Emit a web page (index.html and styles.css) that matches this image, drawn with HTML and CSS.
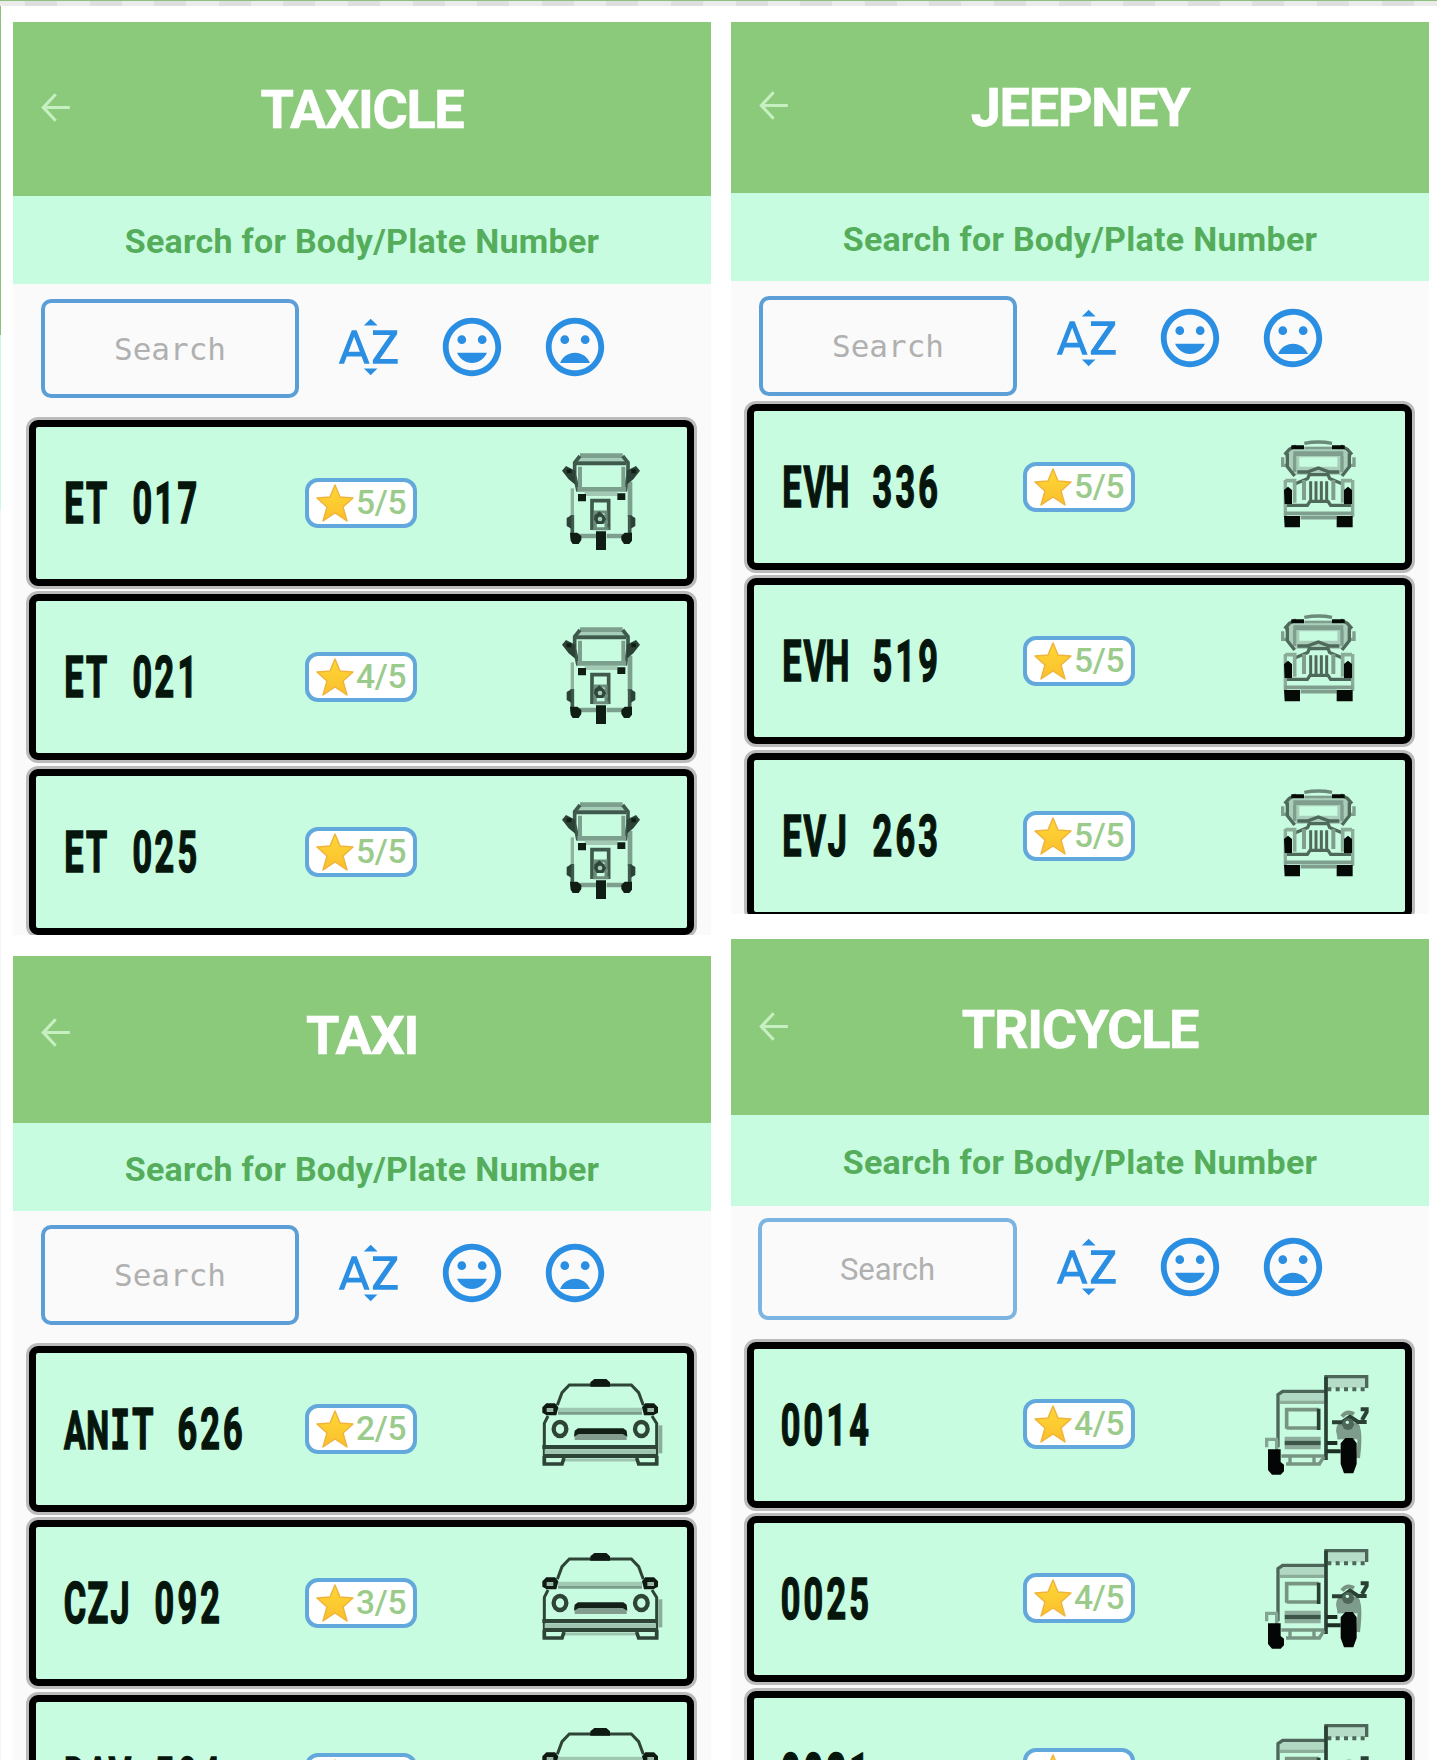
FILE: index.html
```html
<!DOCTYPE html>
<html lang="en">
<head>
<meta charset="utf-8">
<title>Vehicle lists</title>
<link rel="stylesheet" href="styles.css">
</head>
<body>
<svg class="defs" aria-hidden="true">
  <linearGradient id="gold" x1="0" y1="0" x2="0" y2="1"><stop offset="0" stop-color="#fdd835"/><stop offset="1" stop-color="#fbbf2d"/></linearGradient>
  <symbol id="back" viewBox="0 0 24 24"><path d="M20 11.2H7.2l5.5-6-1.2-1.2L4 12l7.5 8 1.2-1.2-5.5-6H20z"/></symbol>
  <symbol id="az" viewBox="0 0 24 24"><path d="M14.94 4.66h-4.72l2.36-2.36 2.36 2.36zm-4.69 14.71h4.66l-2.33 2.33-2.33-2.33zM6.1 6.27L1.6 17.73h1.84l.92-2.45h5.11l.92 2.45h1.84L7.74 6.27H6.1zm-1.13 7.37l1.94-5.18 1.94 5.18H4.97zm10.76 2.5h6.12v1.59h-8.53v-1.29l5.92-8.56h-5.88v-1.6h8.3v1.26l-5.93 8.6z"/></symbol>
  <symbol id="happy" viewBox="0 0 24 24"><path d="M11.99 2C6.47 2 2 6.48 2 12s4.47 10 9.99 10C17.52 22 22 17.52 22 12S17.52 2 11.99 2zM12 20c-4.42 0-8-3.58-8-8s3.58-8 8-8 8 3.58 8 8-3.58 8-8 8zm3.5-9c.83 0 1.5-.67 1.5-1.5S16.33 8 15.5 8 14 8.67 14 9.5s.67 1.5 1.5 1.5zm-7 0c.83 0 1.5-.67 1.5-1.5S9.33 8 8.5 8 7 8.67 7 9.5 7.67 11 8.5 11zm3.5 6.5c2.33 0 4.31-1.46 5.11-3.5H6.89c.8 2.04 2.78 3.5 5.11 3.5z"/></symbol>
  <symbol id="sad" viewBox="0 0 24 24"><path d="M11.99 2C6.47 2 2 6.48 2 12s4.47 10 9.99 10C17.52 22 22 17.52 22 12S17.52 2 11.99 2zM12 20c-4.42 0-8-3.58-8-8s3.58-8 8-8 8 3.58 8 8-3.58 8-8 8zm3.5-9c.83 0 1.5-.67 1.5-1.5S16.33 8 15.5 8 14 8.67 14 9.5s.67 1.5 1.5 1.5zm-7 0c.83 0 1.5-.67 1.5-1.5S9.33 8 8.5 8 7 8.67 7 9.5 7.67 11 8.5 11zm3.5 3c-2.33 0-4.31 1.46-5.11 3.5h10.22c-.8-2.04-2.78-3.5-5.11-3.5z"/></symbol>
  <symbol id="star" viewBox="0 0 38 38"><path fill="url(#gold)" stroke="#f0b43c" stroke-width="1.5" stroke-linejoin="round" d="M19 1l5 12 13 1-10 9 4 14-12-8-12 8 4-14L1 14l13-1z"/></symbol>

  <symbol id="taxicle" viewBox="0 0 420 420">
    <g fill="none" stroke="#3f5a4d" stroke-width="11">
      <path stroke="#7da08e" stroke-width="14" d="M120 77H248"/>
      <path stroke="#a5cdb8" stroke-width="10" d="M114 89H252"/>
      <path d="M120 78L104 98V135L114 184M248 78L264 98V135L256 184"/>
      <path stroke-width="12" d="M108 100H258"/>
      <path stroke="#7da08e" stroke-width="14" d="M112 178H258"/>
      <path stroke="#7da08e" stroke-width="12" d="M120 110V172M250 110V172"/>
      <path stroke="#a3c9b5" stroke-width="12" d="M134 192H232"/>
      <path stroke="#8fb3a0" stroke-width="10" d="M97 175V260"/>
      <path stroke="#7da08e" stroke-width="14" d="M270 155V262"/>
      <path d="M97 255V325M269 255V325"/>
      <path stroke="#7da08e" stroke-width="14" d="M110 318H168M200 318H256"/>
      <path d="M156 300V212H206V300"/>
      <path stroke="#6d8d7c" stroke-width="9" d="M166 296V246H198V296M160 276H204M160 296H206"/>
    </g>
    <path fill="#2c4236" d="M66 122l12-14 28 14v42l-20-16zM300 122l-12-14-28 14v42l20-16zM80 264l14-8v40l-14-8zM286 264l-14-8v40l14-8z"/>
    <path fill="#101d15" d="M80 118h14v12H80zM274 118h14v12h-14zM114 192h24v22h-24zM232 190h24v20h-24zM90 308h22l12 10v12l-8 12H98l-6-10zM276 308h-22l-10 10v12l8 12h16l8-10zM168 304h30v56h-30z"/>
    <path fill="#2f463a" d="M164 256l14-12 14 12 6 12-8 14h-20l-8-14z"/>
    <circle cx="180" cy="267" r="7" fill="#a5cdb8"/>
  </symbol>

  <symbol id="jeepney" viewBox="0 0 420 420">
    <path fill="#a9cfbb" d="M76 96L104 88H246L274 96V130L250 165H100L76 130z"/>
    <path fill="#c8fce0" d="M118 112H232V140H118zM66 112h16v24H66zM268 112h16v24h-16z"/>
    <g fill="none" stroke="#4f6a5b" stroke-width="10">
      <path stroke="#6c8a7a" d="M133 70Q175 62 216 70"/>
      <path stroke-width="8" stroke="#7f9e8d" d="M133 84H216"/>
      <path d="M74 104L88 88L108 78M276 104L262 88L242 78"/>
      <path stroke="#7f9e8d" stroke-width="14" d="M100 101H250"/>
      <path stroke="#7f9e8d" d="M68 112V136H80M282 112V136H270"/>
      <path d="M82 100V140L104 168M268 100V140L246 168"/>
      <path stroke="#7f9e8d" d="M104 108V156M246 108V156"/>
      <path d="M112 156H142L175 144L208 156H238"/>
      <path d="M142 178L148 164H204L210 178M104 192L142 176M248 192L210 176"/>
      <path stroke="#7f9e8d" stroke-width="12" d="M132 180V240M220 180V240"/>
      <path stroke-width="9" d="M152 184V240M168 184V240M184 184V240M200 184V240"/>
      <path stroke="#8aac99" stroke-width="11" d="M76 182H104V248M276 182H248V248"/>
      <path d="M80 256H142L150 244H204L212 256H276"/>
      <path stroke="#8aac99" d="M76 180V290M278 180V290"/>
      <path stroke="#7f9e8d" stroke-width="11" d="M74 280H278M122 293H230"/>
    </g>
    <path fill="#050a07" d="M94 76h38v12H94zM216 76h38v12h-38zM72 210l12-10 12 10v42H74zM276 210l-12-10-12 10v42h24zM72 288h48v34H74zM230 288h48v34h-48z"/>
  </symbol>

  <symbol id="taxi" viewBox="0 0 420 420">
    <g fill="none" stroke="#2d4437" stroke-width="9">
      <path d="M82 136L96 98L118 75H304L326 98L340 136"/>
      <path stroke="#9fc9b2" stroke-width="18" d="M84 152H336"/>
      <path stroke="#7a9c89" stroke-width="8" d="M84 160H336"/>
      <path d="M54 168L43 190V310M366 168L380 190V310"/>
      <path stroke="#8aad99" stroke-width="12" d="M391 196V280"/>
      <ellipse cx="90" cy="207" rx="19" ry="21" stroke-width="13"/>
      <ellipse cx="334" cy="207" rx="19" ry="21" stroke-width="13"/>
      <path stroke="#9fc5b1" stroke-width="14" d="M44 275H378"/>
      <path stroke-width="12" d="M37 261H384M44 288H378"/>
      <path stroke="#9fc5b1" d="M100 300H320"/>
      <path stroke-width="11" d="M43 288V312H96L102 294M380 288V312H326L320 294"/>
    </g>
    <path fill="#0e1912" d="M181 80V67l12-10h36l11 10v13zM37 142l12-12h26l10 12-6 24H50l-13-8zM384 142l-12-12h-26l-10 12 6 24h28l14-8z"/>
    <path fill="#9bb7a8" d="M50 144h20v12H50zM352 144h20v12h-20z"/>
    <path fill="#829c8e" d="M134 218h156v22H134z"/>
    <path fill="#122018" d="M132 230l2-18 10-7h136l10 7 2 18-14-8H146z"/>
  </symbol>

  <symbol id="tricycle" viewBox="0 0 420 420">
    <g fill="none" stroke="#4d6659" stroke-width="10">
      <path fill="#b4dcc7" d="M228 86V50H350V84"/>
      <path stroke-width="12" stroke-dasharray="12 13" d="M232 88H350"/>
      <path fill="#b0d8c3" stroke="none" d="M90 98H228V130H90z"/>
      <path d="M84 262V104L98 94H228"/>
      <path stroke="#8bad9a" d="M90 127H222"/>
      <path stroke="#2b4034" stroke-width="11" d="M228 50V300"/>
      <path stroke="#789584" stroke-width="11" d="M110 206V149H206M110 204H206"/>
      <path stroke="#2b4034" stroke-width="11" d="M206 146V210"/>
      <path stroke="#8dac9b" stroke-width="12" d="M104 236H212M104 262H212"/>
      <path stroke="#3d5548" stroke-width="13" d="M104 249H212"/>
      <path stroke="#789584" d="M94 288H222M108 312H212M120 290V312M192 290V312M222 290L208 312"/>
      <path stroke="#83a592" d="M50 262V238H84M80 240V280"/>
      <path stroke="#1c2e24" stroke-width="12" d="M230 249H262M230 274H272"/>
      <path stroke="#789584" stroke-width="12" d="M272 236Q258 210 270 194H320Q334 212 324 294M276 170Q290 150 312 162"/>
      <path stroke="#2b4034" stroke-width="12" d="M246 187H276L300 170L324 186H350M336 180L350 156V148H332"/>
    </g>
    <path fill="#7d9c8b" d="M262 198h68v40h-68z"/>
    <circle cx="294" cy="192" r="18" fill="#4d6659"/>
    <circle cx="292" cy="187" r="5" fill="#c8fce0"/>
    <path fill="#030604" d="M54 268h38v38l10 8v20l-10 10H66l-12-14zM272 250l14-16h22l12 16v62l-10 28h-28l-10-28z"/>
  </symbol>
</svg>

<main class="board">
  <div class="column">
    <section class="panel panel-taxicle">
      <header class="bar"><svg class="back"><use href="#back"/></svg><h1>TAXICLE</h1></header>
      <p class="band">Search for Body/Plate Number</p>
      <div class="tools"><div class="search">Search</div><svg><use href="#az"/></svg><svg><use href="#happy"/></svg><svg><use href="#sad"/></svg></div>
      <div class="list">
        <article class="card"><svg class="plate"><text x="63 101 139 177 214 252">ET 017</text></svg><span class="rating"><svg><use href="#star"/></svg>5/5</span><svg class="vehicle"><use href="#taxicle"/></svg></article>
        <article class="card"><svg class="plate"><text x="63 101 139 177 214 252">ET 021</text></svg><span class="rating"><svg><use href="#star"/></svg>4/5</span><svg class="vehicle"><use href="#taxicle"/></svg></article>
        <article class="card"><svg class="plate"><text x="63 101 139 177 214 252">ET 025</text></svg><span class="rating"><svg><use href="#star"/></svg>5/5</span><svg class="vehicle"><use href="#taxicle"/></svg></article>
      </div>
    </section>
    <section class="panel panel-taxi">
      <header class="bar"><svg class="back"><use href="#back"/></svg><h1>TAXI</h1></header>
      <p class="band">Search for Body/Plate Number</p>
      <div class="tools"><div class="search">Search</div><svg><use href="#az"/></svg><svg><use href="#happy"/></svg><svg><use href="#sad"/></svg></div>
      <div class="list">
        <article class="card"><svg class="plate"><text x="65 103 140 178 214 252 290 328"><tspan class="narrow">AN</tspan><tspan class="slab">I</tspan>T 626</text></svg><span class="rating"><svg><use href="#star"/></svg>2/5</span><svg class="vehicle"><use href="#taxi"/></svg></article>
        <article class="card"><svg class="plate"><text x="65 103 140 177 214 252 290">CZJ 092</text></svg><span class="rating"><svg><use href="#star"/></svg>3/5</span><svg class="vehicle"><use href="#taxi"/></svg></article>
        <article class="card"><svg class="plate"><text x="65 103 140 177 214 252 290">DAV 504</text></svg><span class="rating"><svg><use href="#star"/></svg>3/5</span><svg class="vehicle"><use href="#taxi"/></svg></article>
      </div>
    </section>
  </div>
  <div class="column column-right">
    <section class="panel panel-jeepney">
      <header class="bar"><svg class="back"><use href="#back"/></svg><h1>JEEPNEY</h1></header>
      <p class="band">Search for Body/Plate Number</p>
      <div class="tools"><div class="search">Search</div><svg><use href="#az"/></svg><svg><use href="#happy"/></svg><svg><use href="#sad"/></svg></div>
      <div class="list">
        <article class="card"><svg class="plate"><text x="63 101 139 177 214 252 290">EVH 336</text></svg><span class="rating"><svg><use href="#star"/></svg>5/5</span><svg class="vehicle"><use href="#jeepney"/></svg></article>
        <article class="card"><svg class="plate"><text x="63 101 139 177 214 252 290">EVH 519</text></svg><span class="rating"><svg><use href="#star"/></svg>5/5</span><svg class="vehicle"><use href="#jeepney"/></svg></article>
        <article class="card"><svg class="plate"><text x="63 101 139 177 214 252 290">EVJ 263</text></svg><span class="rating"><svg><use href="#star"/></svg>5/5</span><svg class="vehicle"><use href="#jeepney"/></svg></article>
      </div>
    </section>
    <section class="panel panel-tricycle">
      <header class="bar"><svg class="back"><use href="#back"/></svg><h1>TRICYCLE</h1></header>
      <p class="band">Search for Body/Plate Number</p>
      <div class="tools"><div class="search">Search</div><svg><use href="#az"/></svg><svg><use href="#happy"/></svg><svg><use href="#sad"/></svg></div>
      <div class="list">
        <article class="card"><svg class="plate"><text x="61 99 137 175">0014</text></svg><span class="rating"><svg><use href="#star"/></svg>4/5</span><svg class="vehicle"><use href="#tricycle"/></svg></article>
        <article class="card"><svg class="plate"><text x="61 99 137 175">0025</text></svg><span class="rating"><svg><use href="#star"/></svg>4/5</span><svg class="vehicle"><use href="#tricycle"/></svg></article>
        <article class="card"><svg class="plate"><text x="61 99 137 175">0031</text></svg><span class="rating"><svg><use href="#star"/></svg>4/5</span><svg class="vehicle"><use href="#tricycle"/></svg></article>
      </div>
    </section>
  </div>
</main>
</body>
</html>
```
FILE: styles.css
```css
* { box-sizing: border-box; }
body { margin: 0; background: #fff; font-family: Roboto, "Liberation Sans", sans-serif; }
.defs { position: absolute; width: 0; height: 0; }

/* thin page frame: green line, checker strip and a tinted left edge */
.board {
  display: flex;
  gap: 20px;
  width: 1437px;
  height: 1760px;
  padding: 22px 0 0 13px;
  overflow: hidden;
  background:
    linear-gradient(#8bc17c, #8bc17c) 0 0 / 100% 1px no-repeat,
    repeating-linear-gradient(90deg, #ebebeb 0 25px, #dedede 25px 57px, #ebebeb 57px 64.6px) 0 1px / 100% 5px no-repeat,
    linear-gradient(#8bc17c 335px, #c8fce0 335px 510px, #f4f4f4 510px) 0 0 / 1px 100% no-repeat,
    #fff;
}
.column { display: flex; flex-direction: column; gap: 21px; width: 698px; flex: none; }
.column-right { gap: 25px; }

.panel { display: flex; flex-direction: column; flex: none; overflow: hidden; background: #fafafa; }
.panel-taxicle { height: 913px; }
.panel-jeepney { height: 892px; }
.panel-taxi, .panel-tricycle { height: 830px; }

.bar { display: grid; grid-template-columns: 70px 1fr 70px; align-items: center; flex: none; height: 174px; padding-top: 2px; background: #8bc97b; }
.bar h1 { margin: 0; text-align: center; font-size: 54px; line-height: 60px; font-weight: 700; color: #fff; letter-spacing: -1.3px; -webkit-text-stroke: .6px #fff; white-space: nowrap; }
.back { width: 43px; height: 43px; margin: -6px 0 0 21px; fill: #c6f0c2; }
.band { display: flex; align-items: center; justify-content: center; flex: none; height: 88px; margin: 0; padding-top: 2px; background: #c8fce0; color: #55ad5c; font-size: 34px; font-weight: 700; letter-spacing: .28px; white-space: nowrap; }

.tools { display: flex; align-items: center; flex: none; height: 99px; margin: 15px 0 22px 28px; }
.tools svg { flex: none; width: 70px; height: 70px; margin: -4px 33px 0 0; fill: #2a8fe3; }
.search { display: flex; align-items: center; justify-content: center; flex: none; width: 258px; height: 100%; margin-right: 35px; border: 4px solid #5b9fd6; border-radius: 10px; color: #b0b0b0; font-family: "DejaVu Sans Mono", monospace; font-size: 31px; }

.list { display: flex; flex-direction: column; gap: 8.3px; padding: 0 17px 0 16px; }
.card { display: grid; grid-template-columns: 269px 112px 1fr; align-items: start; flex: none; height: 166px; border: 7px solid #000; border-radius: 9px; background: #c8fce0; box-shadow: 0 0 0 3px rgba(0, 0, 0, .25); }
.plate { width: 260px; height: 152px; }
.plate text { transform: scale(.6, 1) translateY(96px); text-anchor: middle; font-size: 57px; font-weight: 700; fill: #06160d; stroke: #06160d; stroke-width: 1.6; }
.plate .slab { font-family: "DejaVu Sans Mono", monospace; font-size: 56px; }
.plate .narrow { font-size: 54px; }
.rating { display: flex; align-items: center; width: 112px; height: 50px; margin-top: 51px; padding-left: 7px; border: 4px solid #62a8dc; border-radius: 13px; background: #fff; color: #9acb8b; font-size: 33.5px; font-weight: 500; line-height: 42px; letter-spacing: -.3px; white-space: nowrap; }
.rating svg { width: 38px; height: 38px; margin-right: 2px; flex: none; }
.vehicle { width: 140px; height: 140px; margin: 3px 0 0 123px; }

.panel-jeepney .bar { height: 171px; padding-top: 1px; }
.panel-jeepney .band { height: 88px; padding-top: 4px; }
.panel-jeepney .tools { height: 100px; margin-bottom: 8px; }
.panel-jeepney .tools svg { margin-top: -16px; }
.panel-jeepney .vehicle { margin: 9px 0 0 125px; }

.panel-taxi .bar { height: 167px; padding: 0 0 8px; }
.panel-taxi .band { height: 88px; padding-top: 4px; }
.panel-taxi .tools { height: 100px; margin: 14px 0 21px 28px; }
.panel-taxi .tools svg { margin-top: -5px; }
.panel-taxi .vehicle { margin: 7px 0 0 113px; }

.panel-tricycle .bar { height: 176px; padding-top: 5px; }
.panel-tricycle .band { height: 91px; padding-top: 3px; }
.panel-tricycle .tools { height: 102px; margin: 12px 0 22px 27px; }
.panel-tricycle .tools svg { margin-top: -4px; }
.panel-tricycle .search { width: 259px; font-family: Roboto, sans-serif; border-color: #7db5e2; }
.panel-tricycle .rating { margin-top: 50px; }
.panel-tricycle .vehicle { margin: 11px 0 0 115px; }
```
